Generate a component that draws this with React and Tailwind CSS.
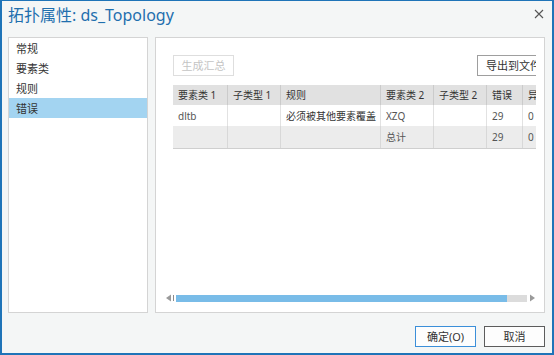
import React from 'react'

const font = { fontFamily: '"Noto Sans", "Noto Sans CJK SC", sans-serif' }

const columns = [
  { key: 'fc1', label: '要素类 1', w: 'w-[54px]' },
  { key: 'st1', label: '子类型 1', w: 'w-[53px]' },
  { key: 'rule', label: '规则', w: 'w-[100px]' },
  { key: 'fc2', label: '要素类 2', w: 'w-[53px]' },
  { key: 'st2', label: '子类型 2', w: 'w-[53px]' },
  { key: 'err', label: '错误', w: 'w-[36px]' },
  { key: 'exc', label: '异常', w: 'w-[31px]' },
]

const rows = [
  { bg: 'bg-white', h: 'h-[21px]', line: 'border-[#e2e2e2]', cells: { fc1: 'dltb', st1: '', rule: '必须被其他要素覆盖', fc2: 'XZQ', st2: '', err: '29', exc: '0' } },
  { bg: 'bg-[#ececec]', h: 'h-[22px]', line: 'border-[#d8d8d8]', cells: { fc1: '', st1: '', rule: '', fc2: '总计', st2: '', err: '29', exc: '0' } },
]

const navItems = ['常规', '要素类', '规则', '错误']

export default function App() {
  return (
    <div
      style={font}
      className="w-[554px] h-[355px] flex flex-col bg-[#f4f6f6] border-x-2 border-b-2 border-t border-[#1f74b8] text-[#333] overflow-hidden"
    >
      {/* Title bar */}
      <div className="h-[28px] flex items-center justify-between pl-[6px] pr-[8px]">
        <span className="text-[16px] text-[#1f6fae] leading-none">拓扑属性: ds_Topology</span>
        <svg width="10" height="10" viewBox="0 0 10 10" className="mt-[-2px]">
          <path d="M1 1 L9 9 M9 1 L1 9" stroke="#555" strokeWidth="1.1" />
        </svg>
      </div>

      {/* Panels */}
      <div className="mt-[8px] h-[276px] flex gap-[7px] pl-[6px] pr-[7px]">
        <div className="w-[140px] h-full bg-white border border-[#d4d4d4] flex flex-col">
          {navItems.map((item, i) => (
            <div
              key={item}
              className={
                'h-[20px] flex items-center pl-[7px] text-[11px] leading-none ' +
                (i === 3 ? 'bg-[#a3d4f1]' : '')
              }
            >
              {item}
            </div>
          ))}
        </div>

        <div className="w-[390px] h-full bg-white border border-[#d4d4d4] flex flex-col pl-[9px] pr-[8px] pt-[17px] pb-[10px]">
          <div className="ml-[8px] flex-1 overflow-hidden">
            <div className="w-[380px]">
              <div className="flex items-center justify-between h-[21px] text-[11px] leading-none whitespace-nowrap">
                <div className="w-[61px] h-[21px] border border-[#dedede] bg-white text-[#c4c4c4] flex items-center justify-center">
                  生成汇总
                </div>
                <div className="w-[76px] h-[21px] border border-[#9e9e9e] bg-white flex items-center pl-[8px]">
                  导出到文件
                </div>
              </div>

              <div className="mt-[9px] border-b border-[#cfcfcf] text-[10px] leading-none whitespace-nowrap">
                <div className="flex h-[20px] bg-[#e1e1e1]">
                  {columns.map((c, i) => (
                    <div
                      key={c.key}
                      className={c.w + ' shrink-0 overflow-hidden flex items-center pl-[5px] ' + (i > 0 ? 'border-l border-[#cbcbcb]' : '')}
                    >
                      {c.label}
                    </div>
                  ))}
                </div>
                {rows.map((r, ri) => (
                  <div key={ri} className={'flex ' + r.h + ' ' + r.bg}>
                    {columns.map((c, i) => (
                      <div
                        key={c.key}
                        className={
                          c.w + ' shrink-0 overflow-hidden flex items-center pl-[5px] ' +
                          (c.key === 'rule' ? 'text-[#333] ' : 'text-[#555] ') +
                          (i > 0 ? 'border-l ' + r.line : '')
                        }
                      >
                        {r.cells[c.key]}
                      </div>
                    ))}
                  </div>
                ))}
              </div>
            </div>
          </div>

          {/* Horizontal scrollbar */}
          <div className="h-[8px] flex items-center">
            <svg width="7" height="8" viewBox="0 0 7 8" className="shrink-0">
              <path d="M6 0.5 L6 7.5 L1 4 Z" fill="#9a9a9a" />
            </svg>
            <div className="w-[1px] h-[6px] bg-[#8a8a8a] ml-[1px] shrink-0" />
            <div className="ml-[2px] w-[351px] h-[7px] flex bg-[#dcdcdc]">
              <div className="w-[331px] h-full bg-[#79bce8]" />
            </div>
            <svg width="7" height="8" viewBox="0 0 7 8" className="ml-[2px] shrink-0">
              <path d="M1 0.5 L1 7.5 L6 4 Z" fill="#9a9a9a" />
            </svg>
          </div>
        </div>
      </div>

      {/* Footer buttons */}
      <div className="mt-[13px] flex justify-end gap-[8px] pr-[7px] text-[11px] leading-none">
        <div className="w-[61px] h-[21px] border border-[#3b8fd9] bg-[#fdfdfd] flex items-center justify-center">
          确定(O)
        </div>
        <div className="w-[61px] h-[21px] border border-[#5c5c5c] bg-[#fdfdfd] flex items-center justify-center">
          取消
        </div>
      </div>
    </div>
  )
}
